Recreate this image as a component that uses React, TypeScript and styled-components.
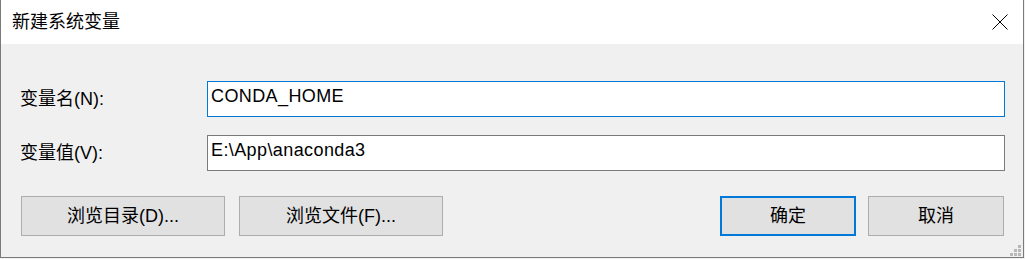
import React from "react";
import styled, { createGlobalStyle } from "styled-components";

const GlobalStyle = createGlobalStyle`
  html, body {
    margin: 0;
    padding: 0;
    background: #f0f0f0;
  }
  body {
    font-family: "Liberation Sans", "Noto Sans CJK SC", sans-serif;
    font-size: 18px;
    color: #000;
  }
  * { box-sizing: border-box; }
`;

const Window = styled.div`
  position: relative;
  width: 1024px;
  height: 258px;
  display: flex;
  flex-direction: column;
  border-left: 1px solid #7a7a7a;
  border-right: 1px solid #7a7a7a;
  border-bottom: 1px solid #7a7a7a;
  background: #f0f0f0;
`;

const TitleBar = styled.div`
  height: 44px;
  flex: none;
  display: flex;
  align-items: center;
  justify-content: space-between;
  background: #ffffff;
  padding-left: 11px;
`;

const Title = styled.span`
  font-size: 18px;
  line-height: 20px;
  color: #000;
`;

const CloseButton = styled.button`
  width: 46px;
  height: 44px;
  border: none;
  background: transparent;
  padding: 0;
  display: flex;
  align-items: center;
  justify-content: center;
`;

const Body = styled.div`
  flex: 1;
  display: flex;
  flex-direction: column;
  padding: 37px 18px 0 19px;
`;

const FormGrid = styled.div`
  display: grid;
  grid-template-columns: 187px 1fr;
  grid-auto-rows: 36px;
  row-gap: 18px;
`;

const Label = styled.label`
  display: flex;
  align-items: center;
  font-size: 18px;
  line-height: 20px;
  white-space: nowrap;
`;

const TextBox = styled.input<{ $focused?: boolean }>`
  width: 100%;
  height: 36px;
  margin: 0;
  border: 1px solid ${(p) => (p.$focused ? "#0078d7" : "#7a7a7a")};
  background: #ffffff;
  padding: 0 3px 6px 3px;
  font-family: "Liberation Sans", "Noto Sans CJK SC", sans-serif;
  font-size: 18px;
  letter-spacing: 0.4px;
  color: #000;
  outline: none;
`;

const ButtonRow = styled.div`
  display: flex;
  align-items: center;
  margin: 25px 1px 0 1px;
`;

const ButtonGroup = styled.div<{ $gap: number }>`
  display: flex;
  gap: ${(p) => p.$gap}px;
`;

const Spacer = styled.div`
  flex: 1;
`;

const DialogButton = styled.button<{ $width: number; $default?: boolean }>`
  width: ${(p) => p.$width}px;
  height: 40px;
  margin: 0;
  padding: 0;
  background: #e1e1e1;
  border: ${(p) => (p.$default ? "2px solid #0078d7" : "1px solid #adadad")};
  font-family: "Liberation Sans", "Noto Sans CJK SC", sans-serif;
  font-size: 18px;
  line-height: 20px;
  color: #000;
  display: flex;
  align-items: center;
  justify-content: center;
`;

const Grip = styled.svg`
  position: absolute;
  right: 2px;
  bottom: 1px;
`;

const CloseIcon = () => (
  <svg width="16" height="16" viewBox="0 0 16 16">
    <path d="M0.5 0.5 L15.5 15.5 M15.5 0.5 L0.5 15.5" stroke="#000" strokeWidth="1" fill="none" />
  </svg>
);

export default function App() {
  const dots = [
    [8, 0],
    [4, 4],
    [8, 4],
    [0, 8],
    [4, 8],
    [8, 8],
  ];
  return (
    <>
      <GlobalStyle />
      <Window>
        <TitleBar>
          <Title>新建系统变量</Title>
          <CloseButton aria-label="关闭">
            <CloseIcon />
          </CloseButton>
        </TitleBar>
        <Body>
          <FormGrid>
            <Label>变量名(N):</Label>
            <TextBox $focused defaultValue="CONDA_HOME" />
            <Label>变量值(V):</Label>
            <TextBox defaultValue="E:\App\anaconda3" />
          </FormGrid>
          <ButtonRow>
            <ButtonGroup $gap={14}>
              <DialogButton $width={204}>浏览目录(D)...</DialogButton>
              <DialogButton $width={204}>浏览文件(F)...</DialogButton>
            </ButtonGroup>
            <Spacer />
            <ButtonGroup $gap={12}>
              <DialogButton $width={136} $default>
                确定
              </DialogButton>
              <DialogButton $width={136}>取消</DialogButton>
            </ButtonGroup>
          </ButtonRow>
        </Body>
        <Grip width="11" height="11" viewBox="0 0 11 11">
          {dots.map(([x, y], i) => (
            <rect key={i} x={x} y={y} width="3" height="3" fill="#b8b8b8" />
          ))}
        </Grip>
      </Window>
    </>
  );
}
